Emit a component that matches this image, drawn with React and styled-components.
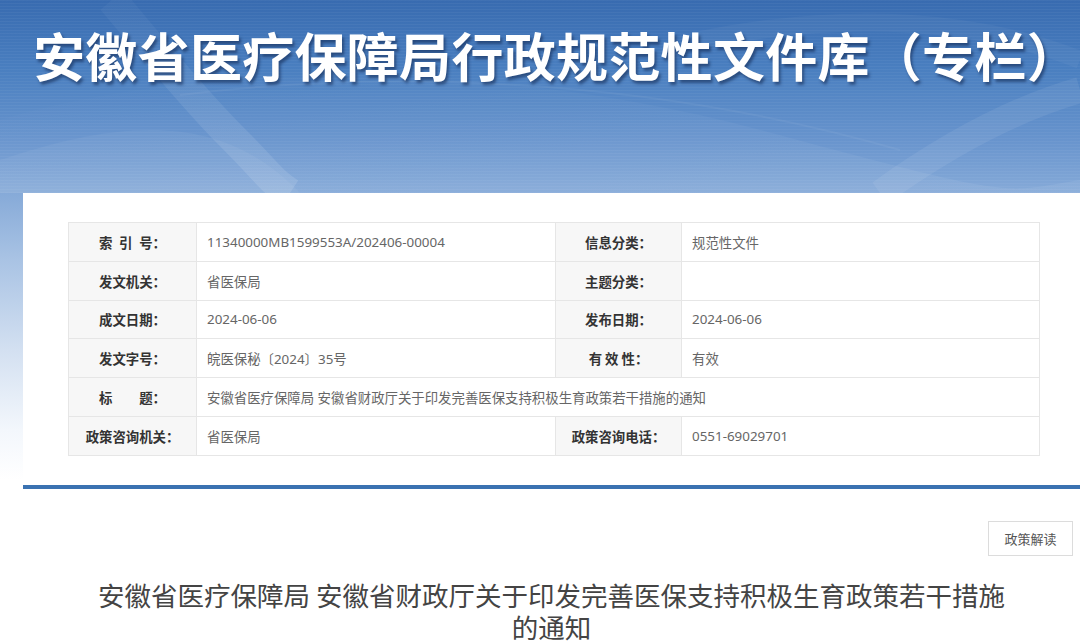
import React from 'react';
import styled, { createGlobalStyle } from 'styled-components';

const GlobalStyle = createGlobalStyle`
  html, body { margin: 0; padding: 0; }
  body {
    background: #fff;
    overflow: hidden;
    font-family: "Noto Sans", "Noto Sans CJK SC", sans-serif;
  }
  * { box-sizing: border-box; }
`;

const Page = styled.div`
  width: 1080px;
  height: 643px;
  overflow: hidden;
  background: linear-gradient(
    180deg,
    #386bb0 0px,
    #4a7fc0 70px,
    #6894cd 140px,
    #86aad8 193px,
    #a9c3e4 260px,
    #d3e0f1 350px,
    #f3f7fc 430px,
    #ffffff 480px
  );
`;

const Banner = styled.header`
  position: relative;
  height: 193px;
  overflow: hidden;
`;

const BannerArt = styled.svg`
  position: absolute;
  inset: 0;
  width: 100%;
  height: 100%;
`;

const BannerTitle = styled.h1`
  position: relative;
  margin: 0;
  padding: 27px 0 0 33px;
  font-family: "Noto Sans CJK SC", sans-serif;
  font-weight: 700;
  font-size: 52px;
  line-height: 56px;
  letter-spacing: 0.3px;
  color: #fff;
  white-space: nowrap;
  text-shadow: 2px 3px 3px rgba(15, 35, 75, 0.55);
`;

const Card = styled.main`
  margin-left: 23px;
  background: #fff;
  padding-top: 29px;
  min-height: 450px;
`;

const InfoTable = styled.div`
  margin: 0 40px 0 45px;
  display: grid;
  grid-template-columns: 128px 359px 126px 1fr;
  border-top: 1px solid #e6e6e6;
  border-left: 1px solid #e6e6e6;
`;

const Cell = styled.div`
  height: 38.8px;
  display: flex;
  align-items: center;
  border-right: 1px solid #e6e6e6;
  border-bottom: 1px solid #e6e6e6;
  font-size: 13.4px;
  white-space: pre;
  grid-column: ${(p) => (p.$span ? `span ${p.$span}` : 'auto')};
`;

const Label = styled(Cell)`
  justify-content: center;
  background: #f7f7f7;
  font-family: "Noto Sans CJK SC", sans-serif;
  font-weight: 700;
  color: #333;
`;

const Value = styled(Cell)`
  padding-left: 10px;
  color: #666;
  font-family: "Noto Sans", "Noto Sans CJK SC", sans-serif;
`;

const Divider = styled.div`
  margin-top: 29px;
  height: 4px;
  background: #3a72b1;
`;

const Toolbar = styled.div`
  display: flex;
  justify-content: flex-end;
  padding: 32px 7px 0 0;
`;

const ToolButton = styled.button`
  width: 85px;
  height: 35px;
  border: 1px solid #dcdcdc;
  background: #fff;
  color: #555;
  font-family: "Noto Sans CJK SC", sans-serif;
  font-size: 13px;
  padding: 0;
  cursor: pointer;
`;

const DocTitle = styled.h2`
  margin: 23px auto 0;
  max-width: 925px;
  text-align: center;
  font-family: "Noto Sans CJK SC", sans-serif;
  font-weight: 400;
  font-size: 26.5px;
  line-height: 32px;
  color: #444;
`;

const rows = [
  [['索\u2002引\u2002号：', '11340000MB1599553A/202406-00004'], ['信息分类：', '规范性文件']],
  [['发文机关：', '省医保局'], ['主题分类：', '']],
  [['成文日期：', '2024-06-06'], ['发布日期：', '2024-06-06']],
  [['发文字号：', '皖医保秘〔2024〕35号'], ['有 效 性：', '有效']],
  [['标　　题：', '安徽省医疗保障局 安徽省财政厅关于印发完善医保支持积极生育政策若干措施的通知']],
  [['政策咨询机关：', '省医保局'], ['政策咨询电话：', '0551-69029701']],
];

function BannerDecoration() {
  return (
    <BannerArt viewBox="0 0 1080 193" preserveAspectRatio="none">
      <defs>
        <pattern id="lines" width="6" height="3" patternUnits="userSpaceOnUse">
          <rect width="6" height="1" fill="#ffffff" opacity="0.04" />
        </pattern>
        <linearGradient id="streak" x1="0" y1="0" x2="0" y2="1">
          <stop offset="0" stopColor="#fff" stopOpacity="0.03" />
          <stop offset="1" stopColor="#fff" stopOpacity="0.12" />
        </linearGradient>
        <linearGradient id="glow" x1="0" y1="0" x2="1" y2="1">
          <stop offset="0" stopColor="#fff" stopOpacity="0" />
          <stop offset="1" stopColor="#fff" stopOpacity="0.14" />
        </linearGradient>
      </defs>
      <rect width="1080" height="193" fill="url(#lines)" />
      <path d="M0 120 C 200 60, 500 60, 760 130 S 1000 193, 1080 180 L1080 193 L0 193 Z" fill="url(#glow)" opacity="0.5" />
      <path d="M0 160 C 120 120, 220 110, 300 193 L0 193 Z" fill="#fff" opacity="0.05" />
      <path d="M112 0 C 150 45, 190 95, 230 135 S 270 180, 290 193" stroke="url(#streak)" strokeWidth="30" fill="none" />
      <path d="M180 95 C 380 70, 640 75, 900 150" stroke="#fff" strokeOpacity="0.05" strokeWidth="2" fill="none" />
      <path d="M880 193 C 940 150, 1010 110, 1080 90" stroke="#fff" strokeOpacity="0.07" strokeWidth="26" fill="none" />
      <path d="M700 40 C 850 10, 980 20, 1080 60" stroke="#fff" strokeOpacity="0.04" strokeWidth="18" fill="none" />
    </BannerArt>
  );
}

export default function App() {
  return (
    <>
      <GlobalStyle />
      <Page>
        <Banner>
          <BannerDecoration />
          <BannerTitle>安徽省医疗保障局行政规范性文件库（专栏）</BannerTitle>
        </Banner>
        <Card>
          <InfoTable>
            {rows.map((row, ri) =>
              row.map(([label, value], ci) => (
                <React.Fragment key={`${ri}-${ci}`}>
                  <Label>{label}</Label>
                  <Value $span={row.length === 1 ? 3 : undefined}>{value}</Value>
                </React.Fragment>
              ))
            )}
          </InfoTable>
          <Divider />
          <Toolbar>
            <ToolButton type="button">政策解读</ToolButton>
          </Toolbar>
          <DocTitle>
            安徽省医疗保障局 安徽省财政厅关于印发完善医保支持积极生育政策若干措施的通知
          </DocTitle>
        </Card>
      </Page>
    </>
  );
}
